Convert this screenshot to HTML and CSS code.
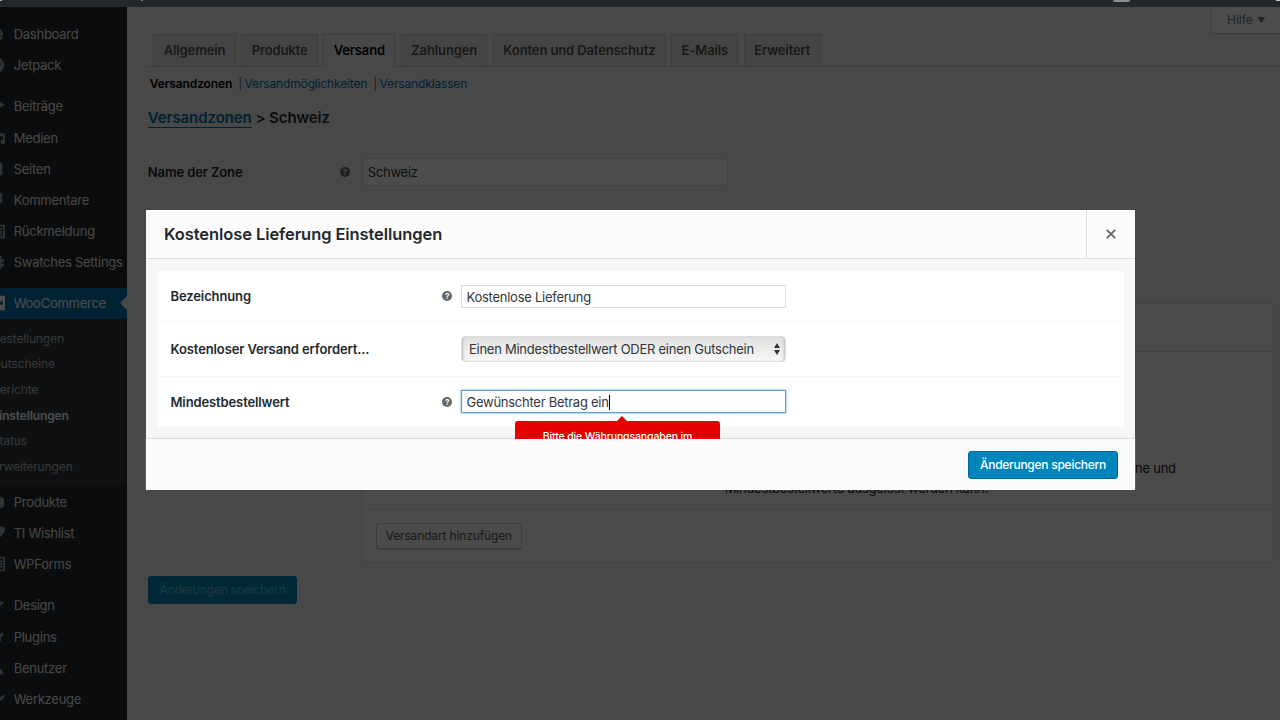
FILE: index.html
```html
<!DOCTYPE html>
<html lang="de">
<head>
  <meta charset="UTF-8">
  <title>WooCommerce Einstellungen - Versand</title>
  <link rel="stylesheet" href="styles.css">
</head>
<body>
  <div class="adminbar">
    <span class="bar-logo"></span>
    <span class="bar-plus"></span>
    <span class="bar-user"></span>
    <span class="bar-avatar"></span>
  </div>

  <div class="wrap">
    <ul class="menu">
      <li><svg viewBox="0 0 20 20"><path fill-rule="evenodd" d="M10 3a8 8 0 0 0-6 13h12a8 8 0 0 0-6-13zM13 7l2 1-4 4a2 2 0 1 1-1-1zM15 12h2v1h-2z"/></svg>Dashboard</li>
      <li><svg viewBox="0 0 20 20"><path fill-rule="evenodd" d="M10 1a9 9 0 1 0 0 18 9 9 0 0 0 0-18zM9 4v7H5zM12 16V8h4z"/></svg>Jetpack</li>
      <li class="sep"></li>
      <li><svg viewBox="0 0 20 20"><path d="M9 2l11 7-6 3-5 6-1-6-5-3z"/></svg>Beiträge</li>
      <li><svg viewBox="0 0 20 20"><path d="M3 3h8v8H3zM13 5h7v10a2.500 2.500 0 1 1-2-3V8h-5z"/></svg>Medien</li>
      <li><svg viewBox="0 0 20 20"><path d="M4 3h13v14H4z"/></svg>Seiten</li>
      <li><svg viewBox="0 0 20 20"><path d="M5 2h10q2 0 2 2v7q0 2-2 2h-3l-5 5v-5H5q-2 0-2-2V4q0-2 2-2z"/></svg>Kommentare</li>
      <li><svg viewBox="0 0 20 20"><path fill-rule="evenodd" d="M2 3h18v15H2zM4 5v11h14V5zM6 7h11v2H6zM6 10h11v2H6zM6 13h11v2H6z"/></svg>Rückmeldung</li>
      <li><svg viewBox="0 0 20 20"><path d="M8 3h3v4h2V3h3v4h3v3h-3v2h3v3h-3v3h-3v-3h-2v3H8z"/></svg>Swatches Settings</li>
      <li class="sep"></li>
      <li class="current"><svg viewBox="0 0 20 20"><path fill-rule="evenodd" d="M2 2h17q2 0 2 2v12q0 2-2 2H2zM16 8a2 2 0 1 0 0 4 2 2 0 0 0 0-4z"/></svg>WooCommerce</li>
      <li class="submenu">
        <ul>
          <li>Bestellungen</li>
          <li>Gutscheine</li>
          <li>Berichte</li>
          <li class="active">Einstellungen</li>
          <li>Status</li>
          <li>Erweiterungen</li>
        </ul>
      </li>
      <li><svg viewBox="0 0 20 20"><path d="M11 2l8 4v9l-8 4-8-4V6z"/></svg>Produkte</li>
      <li><svg viewBox="0 0 20 20"><path d="M11 18C4 12 2 9 2 6.500 2 2 9 2 11 5c2-3 9-3 9 1.500 0 2.500-2 5.500-9 11.500z"/></svg>TI Wishlist</li>
      <li><svg viewBox="0 0 20 20"><path fill-rule="evenodd" d="M4 2h16v16H4zM6 4v12h12V4zM8 6h9v2H8zM8 9h9v2H8zM8 12h9v2H8z"/></svg>WPForms</li>
      <li class="sep"></li>
      <li><svg viewBox="0 0 20 20"><path d="M8 4l11 3-6 6-4 5-4-4z"/></svg>Design</li>
      <li><svg viewBox="0 0 20 20"><path d="M17 5l2 2-4 4 1 3-5 3-6-5 4-5 4 1z"/></svg>Plugins</li>
      <li><svg viewBox="0 0 20 20"><path d="M10 3a3 3 0 0 1 2 7c4 0 6 3 6 7H3c0-4 2-7 5-7a3 3 0 0 1 2-7z"/></svg>Benutzer</li>
      <li><svg viewBox="0 0 20 20"><path d="M19 5a5 5 0 0 1-7 6l-7 7-3-3 7-7a5 5 0 0 1 5-7l-2 4 3 3z"/></svg>Werkzeuge</li>
    </ul>

    <div class="content">
      <div class="help-tab">Hilfe <span>▼</span></div>
      <div class="tabs">
        <a>Allgemein</a>
        <a>Produkte</a>
        <a class="active">Versand</a>
        <a>Zahlungen</a>
        <a>Konten und Datenschutz</a>
        <a>E-Mails</a>
        <a>Erweitert</a>
      </div>
      <div class="subsub"><b>Versandzonen</b><i>|</i><a>Versandmöglichkeiten</a><i>|</i><a>Versandklassen</a></div>
      <h2><a>Versandzonen</a> &gt; Schweiz</h2>
      <div class="zone-row">
        <b>Name der Zone</b>
        <span class="tip">?</span>
        <div class="zone-input">Schweiz</div>
      </div>
      <div class="methods">
        <div class="methods-head"></div>
        <div class="methods-body">
          <p class="first">Nur Kunden innerhalb der Zone und</p>
          <p>Mindestbestellwerte ausgelöst werden kann.</p>
        </div>
        <div class="methods-foot"><span class="btn-grey">Versandart hinzufügen</span></div>
      </div>
      <span class="btn save-page">Änderungen speichern</span>
    </div>
  </div>

  <div class="backdrop"></div>

  <div class="modal">
    <div class="modal-header">
      <h1>Kostenlose Lieferung Einstellungen</h1>
      <div class="close"><svg viewBox="0 0 10 10"><path d="M.8.8l8.400 8.400M9.200.8L.8 9.200"/></svg></div>
    </div>
    <div class="modal-body">
      <div class="form">
        <div class="row">
          <b>Bezeichnung</b>
          <span class="tip">?</span>
          <div class="input">Kostenlose Lieferung</div>
        </div>
        <div class="row tall">
          <b>Kostenloser Versand erfordert...</b>
          <div class="select">Einen Mindestbestellwert ODER einen Gutschein
            <svg viewBox="0 0 8 12"><path d="M4 0l3 5H1zM4 12l3-5H1z"/></svg>
          </div>
        </div>
        <div class="row">
          <b>Mindestbestellwert</b>
          <span class="tip">?</span>
          <div class="input focus">Gewünschter Betrag ein<span class="caret"></span></div>
        </div>
      </div>
      <div class="error">Bitte die Währungsangaben im</div>
    </div>
    <div class="modal-footer"><span class="btn">Änderungen speichern</span></div>
  </div>
</body>
</html>
```
FILE: styles.css
```css
* {
  box-sizing: border-box;
}

body {
  margin: 0;
  height: 720px;
  overflow: hidden;
  background: #f1f1f1;
  color: #23282d;
  font-family: Inter, "Liberation Sans", sans-serif;
  font-size: 13px;
  letter-spacing: -.26px;
}

ul {
  margin: 0;
  padding: 0;
  list-style: none;
}

/* admin bar stays above the backdrop */
.adminbar {
  position: relative;
  z-index: 3;
  display: flex;
  height: 7px;
  background: #23282d;
}

.bar-logo {
  width: 2px;
  height: 1px;
  background: #aaa;
}

.bar-plus {
  width: 2px;
  height: 1px;
  margin-left: 139px;
  background: #777;
}

.bar-user {
  width: 17px;
  height: 2px;
  margin-left: 970px;
  border-radius: 0 0 6px 6px;
  background: #8b8d8f;
}

.bar-avatar {
  width: 4px;
  height: 1px;
  margin-left: auto;
  background: #ccc;
}

.wrap {
  display: flex;
  height: 713px;
}

/* sidebar */
.menu {
  width: 127.3px;
  flex: none;
  padding-top: 11.4px;
  overflow: hidden;
  background: #23282d;
  color: #eee;
}

.menu > li {
  display: flex;
  align-items: center;
  height: 31.2px;
  white-space: nowrap;
}

.menu svg {
  width: 18px;
  height: 18px;
  flex: none;
  margin-left: -13px;
  margin-right: 8.7px;
  fill: #a0a5aa;
}

.menu > .sep {
  height: 10px;
}

.menu > .current {
  position: relative;
  background: #0073aa;
  color: #fff;
}

.menu .current svg {
  fill: #fff;
}

.menu .current::after {
  content: "";
  position: absolute;
  right: 0;
  top: 8px;
  border: 7.5px solid transparent;
  border-left: 0;
  border-right-color: #f1f1f1;
}

.menu > .submenu {
  display: block;
  height: 167.2px;
  padding: 6.5px 0 0;
  background: #32373c;
  color: #b4b9be;
  font-size: 12px;
  letter-spacing: -.13px;
}

.submenu li {
  height: 25.7px;
  line-height: 25.7px;
  margin-left: -8px;
}

.submenu .active {
  color: #fff;
  font-weight: 600;
}

/* page */
.content {
  position: relative;
  flex: 1;
  padding: 27px 0 0 20.5px;
}

.help-tab {
  position: absolute;
  top: 0;
  right: 0;
  width: 69px;
  height: 27px;
  padding-left: 15px;
  line-height: 26px;
  background: #fff;
  border: 1px solid #ccc;
  border-width: 0 0 1px 1px;
  color: #72777c;
  font-size: 12px;
  letter-spacing: 0;
}

.help-tab span {
  margin-left: 1px;
  font-size: 8px;
  vertical-align: 1px;
}

.tabs {
  display: flex;
  gap: 5.6px;
  height: 33px;
  padding-left: 5.6px;
  border-bottom: 1px solid #ccc;
  letter-spacing: -.12px;
}

.tabs a {
  height: 32px;
  padding: 0 9.3px;
  line-height: 31px;
  border: 1px solid #ccc;
  border-bottom: 0;
  background: #e5e5e5;
  color: #555;
  font-weight: 600;
}

.tabs .active {
  height: 33px;
  background: #f1f1f1;
  color: #000;
}

.subsub {
  margin: 9px 0 0 2px;
  line-height: 16px;
  font-size: 12px;
  letter-spacing: -.15px;
  color: #666;
}

.subsub b {
  color: #000;
  font-weight: 600;
}

.subsub i {
  margin: 0 2.5px 0 6px;
  font-style: normal;
}

.subsub a,
h2 a {
  color: #0073aa;
}

h2 {
  margin: 16px 0 0;
  line-height: 20px;
  font-size: 15px;
  font-weight: 600;
  letter-spacing: -.08px;
}

h2 a {
  border-bottom: 1px solid #0073aa;
}

b {
  font-weight: 600;
  letter-spacing: -.12px;
}

.zone-row {
  display: flex;
  align-items: center;
  height: 28px;
  margin-top: 30.4px;
}

.zone-row b {
  width: 192px;
}

.tip {
  width: 10px;
  height: 10px;
  border-radius: 50%;
  background: #666;
  color: #fff;
  font-size: 8px;
  font-weight: 700;
  line-height: 10px;
  text-align: center;
}

.zone-input {
  width: 366px;
  height: 28px;
  margin-left: 12px;
  padding-left: 5px;
  line-height: 27px;
  background: #fff;
  border: 1px solid #ddd;
  color: #32373c;
}

.methods {
  width: 912px;
  height: 260px;
  margin: 116.6px 0 13px 214px;
  background: #f9f9f9;
  border: 1px solid #e1e1e1;
}

.methods-head {
  height: 48px;
  border-bottom: 1px solid #e1e1e1;
}

.methods-body {
  height: 158px;
  padding: 106px 97px 0 174px;
  text-align: center;
  line-height: 20px;
  border-bottom: 1px solid #e1e1e1;
}

.methods-body p {
  margin: 0;
  white-space: nowrap;
}

.methods-body .first {
  text-align: right;
}

.methods-foot {
  padding: 13px;
}

.btn-grey {
  display: inline-block;
  width: 146px;
  height: 26px;
  line-height: 24px;
  border: 1px solid #ccc;
  border-radius: 3px;
  box-shadow: 0 1px 0 #ccc;
  background: #f7f7f7;
  color: #555;
  font-size: 12px;
  letter-spacing: -.14px;
  text-align: center;
}

.btn {
  display: inline-block;
  width: 150px;
  height: 28px;
  line-height: 26px;
  border: 1px solid #006799;
  border-radius: 3px;
  background: #0085ba;
  color: #fff;
  font-size: 12px;
  font-weight: 500;
  text-align: center;
}

.save-page {
  width: 149px;
  border-color: #0085ba;
  color: #5cb4d4;
}

.backdrop {
  position: fixed;
  inset: 0;
  z-index: 2;
  background: rgba(0, 0, 0, .7);
}

/* modal */
.modal {
  position: fixed;
  left: 146px;
  top: 210px;
  z-index: 4;
  width: 989px;
  height: 280px;
  background: #f7f7f7;
}

.modal-header {
  display: flex;
  height: 49px;
  background: #fcfcfc;
  border-bottom: 1px solid #ddd;
}

.modal-header h1 {
  flex: 1;
  margin: 0;
  padding-left: 18px;
  line-height: 48px;
  font-size: 16.500px;
  font-weight: 600;
  letter-spacing: -.09px;
}

.close {
  display: flex;
  align-items: center;
  justify-content: center;
  width: 49px;
  border-left: 1px solid #ddd;
}

.close svg {
  width: 10px;
  height: 10px;
  fill: none;
  stroke: #666;
  stroke-width: 1.8;
}

.modal-body {
  position: relative;
  height: 180px;
  padding: 12px 11px 0 12px;
  overflow: hidden;
}

.form {
  height: 156px;
  padding: 0 3px;
  background: #fff;
}

.row {
  display: flex;
  align-items: center;
  height: 50px;
  padding-left: 9.5px;
}

.row + .row {
  border-top: 1px solid #f7f7f7;
}

.row.tall {
  height: 55px;
}

.row b {
  width: 271.5px;
}

.row .input {
  width: 325px;
  height: 23px;
  margin-left: 9px;
  padding-left: 4.5px;
  line-height: 22px;
  border: 1px solid #ddd;
  color: #32373c;
}

.row .focus {
  border-color: #5b9dd9;
  box-shadow: 0 0 2px rgba(30, 140, 190, .8);
}

.caret {
  display: inline-block;
  width: 1px;
  height: 15px;
  background: #000;
  vertical-align: -3px;
}

.select {
  display: flex;
  align-items: center;
  justify-content: space-between;
  width: 325px;
  height: 26px;
  margin: -1px 0 0 19px;
  padding: 0 4px 0 7px;
  border: 1px solid #ddd;
  border-radius: 4px;
  background: linear-gradient(#e0e0e0, #f8f8f8);
  box-shadow: inset 3px 0 3px -2px #bbb, inset -3px 0 3px -2px #bbb;
  color: #32373c;
  white-space: nowrap;
}

.select svg {
  width: 8px;
  height: 12px;
  fill: #333;
}

.error {
  position: absolute;
  left: 369px;
  top: 162px;
  width: 205px;
  height: 50px;
  padding-top: 9px;
  border-radius: 3px;
  background: #e50000;
  color: #fff;
  font-size: 10.500px;
  font-weight: 500;
  letter-spacing: -.12px;
  line-height: 14px;
  text-align: center;
}

.error::before {
  content: "";
  position: absolute;
  left: 102px;
  top: -5px;
  border: 5px solid transparent;
  border-top: 0;
  border-bottom-color: #e50000;
}

.modal-footer {
  display: flex;
  justify-content: flex-end;
  height: 51px;
  padding: 12px 17px 0 0;
  background: #fcfcfc;
  box-shadow: 0 -1px 1px #ddd;
}
```
